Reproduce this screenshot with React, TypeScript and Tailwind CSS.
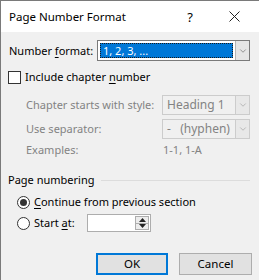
import { ChevronDown } from "lucide-react";

function DropButton({ disabled }: { disabled?: boolean }) {
  return (
    <span
      className={
        "flex h-full w-[14px] items-center justify-center border-l " +
        (disabled ? "border-[#cccccc] bg-[#e8e8e8] text-[#9a9a9a]" : "border-[#b5b5b5] bg-[#e5e5e5] text-[#606060]")
      }
    >
      <ChevronDown size={10} strokeWidth={1.5} />
    </span>
  );
}

function DisabledSelect({ value }: { value: string }) {
  return (
    <div className="flex h-[20px] w-[88px] shrink-0 items-stretch border border-[#cccccc] bg-[#f0f0f0]">
      <span className="flex-1 whitespace-pre pl-[4px] text-[12px] leading-[18px] text-[#838383]">{value}</span>
      <DropButton disabled />
    </div>
  );
}

function Radio({ checked }: { checked?: boolean }) {
  return (
    <span className="flex h-[13px] w-[13px] shrink-0 items-center justify-center rounded-full border border-[#333333] bg-white">
      {checked ? <span className="h-[7px] w-[7px] rounded-full bg-[#333333]" /> : null}
    </span>
  );
}

export default function App() {
  return (
    <div
      className="h-[280px] w-[259px] overflow-hidden whitespace-nowrap border-l border-t border-[#7a7a7a] bg-[#f0f0f0] text-[11px] leading-[16px] text-black"
      style={{ fontFamily: '"Noto Sans", "Open Sans", sans-serif' }}
    >
      <div className="flex h-[31px] items-center bg-white pl-[8px] text-[11.5px]">
        <span className="flex-1">Page Number Format</span>
        <span className="w-[46px] text-center text-[13px]">?</span>
        <span className="flex w-[46px] justify-center pr-[4px]">
          <svg width="11" height="11" viewBox="0 0 11 11" fill="none" stroke="#222" strokeWidth="1">
            <path d="M0.5 0.5 L10.5 10.5 M10.5 0.5 L0.5 10.5" />
          </svg>
        </span>
      </div>

      <div className="pl-[7px] pr-[9px]">
        <div className="mt-[8px] flex h-[21px] items-center">
          <span className="w-[89px] shrink-0 pl-[1px]">
            Number <span className="underline underline-offset-2">f</span>ormat:
          </span>
          <div className="flex h-[21px] flex-1 items-stretch border border-[#7a7a7a] bg-white">
            <div className="m-[2px] flex-1 border border-dotted border-[#1a1a1a] bg-[#0078d7] pl-[2px] leading-[13px] text-white">
              1, 2, 3, ...
            </div>
            <DropButton />
          </div>
        </div>

        <div className="mt-[8px] flex h-[16px] items-center">
          <span className="h-[13px] w-[13px] shrink-0 border border-[#333333] bg-white" />
          <span className="ml-[4px]">
            Include chapter <span className="underline underline-offset-2">n</span>umber
          </span>
        </div>

        <div className="mt-[10px] flex h-[20px] items-center pl-[18px] text-[#838383]">
          <span className="w-[136px] shrink-0">Chapter starts with style:</span>
          <DisabledSelect value="Heading 1" />
        </div>

        <div className="mt-[4px] flex h-[20px] items-center pl-[18px] text-[#838383]">
          <span className="w-[136px] shrink-0">Use separator:</span>
          <DisabledSelect value="-   (hyphen)" />
        </div>

        <div className="mt-[3px] flex h-[16px] items-center pl-[18px] text-[#838383]">
          <span className="w-[137px] shrink-0">Examples:</span>
          <span>1-1, 1-A</span>
        </div>

        <div className="mt-[14px] flex h-[16px] items-center">
          <span>Page numbering</span>
          <span className="ml-[7px] h-px flex-1 bg-[#dcdcdc]" />
        </div>

        <div className="mt-[6px] flex h-[16px] items-center pl-[9px]">
          <Radio checked />
          <span className="ml-[4px]">
            <span className="underline underline-offset-2">C</span>ontinue from previous section
          </span>
        </div>

        <div className="mt-[4px] flex h-[18px] items-center pl-[9px]">
          <Radio />
          <span className="ml-[4px] w-[53px] shrink-0">
            Start <span className="underline underline-offset-2">a</span>t:
          </span>
          <div className="flex h-[18px] w-[64px] items-stretch border border-[#adadad] bg-white">
            <span className="flex-1" />
            <div className="my-[1px] mr-[1px] flex w-[14px] flex-col border border-[#adadad] bg-[#ececec]">
              <span className="flex flex-1 items-center justify-center border-b border-[#adadad]">
                <svg width="7" height="4" viewBox="0 0 7 4"><path d="M3.5 0 L7 4 L0 4 Z" fill="#222" /></svg>
              </span>
              <span className="flex flex-1 items-center justify-center">
                <svg width="7" height="4" viewBox="0 0 7 4"><path d="M0 0 L7 0 L3.5 4 Z" fill="#222" /></svg>
              </span>
            </div>
          </div>
        </div>

        <div className="mt-[21px] flex justify-end gap-[11px]">
          <button className="h-[22px] w-[72px] border-2 border-[#0078d7] bg-[#e1e1e1] text-[11.5px]">OK</button>
          <button className="mr-[-2px] h-[22px] w-[73px] border border-[#adadad] bg-[#e1e1e1] text-[11.5px]">Cancel</button>
        </div>
      </div>
    </div>
  );
}
